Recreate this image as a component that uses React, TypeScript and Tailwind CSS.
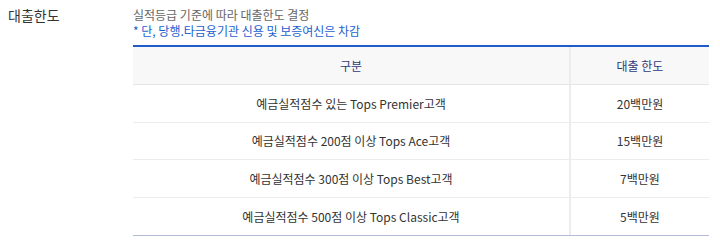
export default function App() {
  const rows: [string, string, string][] = [
    ["예금실적점수 있는 Tops Premier고객", "20백만원", "h-[38px]"],
    ["예금실적점수 200점 이상 Tops Ace고객", "15백만원", "h-[37px]"],
    ["예금실적점수 300점 이상 Tops Best고객", "7백만원", "h-[38px]"],
    ["예금실적점수 500점 이상 Tops Classic고객", "5백만원", "h-[37px]"],
  ];
  return (
    <div
      className="w-[720px] h-[242px] bg-white flex"
      style={{ fontFamily: '"Noto Sans CJK KR", "Noto Sans", sans-serif' }}
    >
      <div className="w-[133px] pl-[8px] pt-[5px] text-[14px] leading-[20px] text-[#333]">대출한도</div>
      <div className="flex flex-col w-[576px]">
        <div className="pt-[7px] text-[12px] leading-[15px] text-[#666]">실적등급 기준에 따라 대출한도 결정</div>
        <div className="mt-[1px] text-[12px] leading-[15px] text-[#1c5fcf]">* 단, 당행.타금융기관 신용 및 보증여신은 차감</div>
        <div className="mt-[7px] border-t-2 border-[#1d5cc9] border-b border-b-[#b3bbd6]">
          <div className="flex h-[38px] bg-[#f8f8f9] border-b border-[#e6e6e6] text-[12px] text-[#2f3b7a]">
            <div className="w-[438px] flex items-center justify-center border-r-2 border-[#ececec]">구분</div>
            <div className="flex-1 flex items-center justify-center">대출 한도</div>
          </div>
          {rows.map((r, i) => (
            <div
              key={i}
              className={`flex ${r[2]} text-[12px] text-[#333] ${i < 3 ? "border-b border-[#ececec]" : ""}`}
            >
              <div className="w-[438px] flex items-center justify-center border-r-2 border-[#ececec]">{r[0]}</div>
              <div className="flex-1 flex items-center justify-center">{r[1]}</div>
            </div>
          ))}
        </div>
      </div>
    </div>
  );
}
